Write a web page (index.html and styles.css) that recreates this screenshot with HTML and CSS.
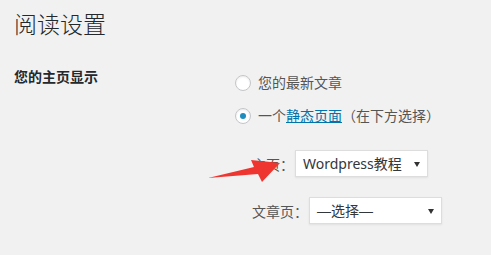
FILE: index.html
```html
<!DOCTYPE html>
<html lang="zh-CN">
<head>
<meta charset="utf-8">
<title>阅读设置</title>
<link rel="stylesheet" href="styles.css">
</head>
<body>
<div class="wrap">
  <h1 class="title">阅读设置</h1>
  <div class="form-row">
    <div class="row-label">您的主页显示</div>
    <div class="row-field">
      <label class="option">
        <span class="radio"></span>
        <span>您的最新文章</span>
      </label>
      <label class="option">
        <span class="radio checked"></span>
        <span>一个<a class="link" href="#">静态页面</a>（在下方选择）</span>
      </label>
      <div class="sub">
        <div class="sub-row">
          <span class="sub-label">主页：</span>
          <span class="select"><span class="select-text">Wordpress教程</span><span class="caret"></span></span>
        </div>
        <div class="sub-row">
          <span class="sub-label">文章页：</span>
          <span class="select"><span class="select-text dash">—选择—</span><span class="caret"></span></span>
        </div>
      </div>
    </div>
  </div>
  <svg class="arrow" width="491" height="255" viewBox="0 0 491 255">
    <polygon points="208,178 254,167 251,160 280,163 262,182 258,174" fill="#ee3530"/>
  </svg>
</div>
</body>
</html>
```
FILE: styles.css
```css
html, body {
  margin: 0;
  padding: 0;
  background: #f1f1f1;
}
body {
  font-family: "Noto Sans", "Noto Sans CJK SC", sans-serif;
  color: #444;
  font-size: 14px;
}
.wrap {
  position: relative;
  width: 491px;
  height: 255px;
  padding-left: 14px;
  box-sizing: border-box;
  overflow: hidden;
}
.title {
  margin: 9px 0 0;
  font-family: "Noto Sans CJK SC", "Noto Sans", sans-serif;
  font-size: 23px;
  line-height: 29px;
  font-weight: 300;
  color: #23282d;
}
.form-row {
  display: grid;
  grid-template-columns: 221px 1fr;
}
.row-label {
  padding-top: 29px;
  font-size: 14px;
  line-height: 20px;
  font-weight: 700;
  color: #23282d;
}
.row-field {
  padding-top: 35px;
  display: flex;
  flex-direction: column;
}
.option {
  display: flex;
  align-items: center;
  height: 20px;
  margin-bottom: 13px;
  line-height: 20px;
  color: #555;
}
.radio {
  width: 14px;
  height: 14px;
  border: 1px solid #c3c6c9;
  border-radius: 50%;
  background: #fff;
  box-shadow: inset 0 1px 2px rgba(0,0,0,0.08);
  margin-right: 7px;
  display: flex;
  align-items: center;
  justify-content: center;
  flex: none;
}
.radio.checked::before {
  content: "";
  width: 6px;
  height: 6px;
  border-radius: 50%;
  background: #1e8cbe;
}
.link {
  color: #0073aa;
  text-decoration: underline;
}
.sub {
  padding-top: 11px;
  padding-left: 17px;
  display: flex;
  flex-direction: column;
  gap: 20px;
}
.sub-row {
  display: flex;
  align-items: center;
  height: 27px;
}
.sub-label {
  color: #555;
  margin-right: 1px;
}
.select {
  position: relative;
  display: flex;
  align-items: center;
  width: 133px;
  height: 27px;
  box-sizing: border-box;
  border: 1px solid #ddd;
  background: #fff;
  box-shadow: 0 1px 2px rgba(0,0,0,0.07);
  padding-left: 7px;
  color: #32373c;
}
.select-text {
  line-height: 20px;
}
.dash {
  font-family: "Liberation Sans", "Noto Sans CJK SC", sans-serif;
}
.caret {
  position: absolute;
  right: 7px;
  top: 50%;
  margin-top: -2px;
  width: 0;
  height: 0;
  border-left: 3px solid transparent;
  border-right: 3px solid transparent;
  border-top: 5px solid #333;
}
.arrow {
  position: absolute;
  left: 0;
  top: 0;
  pointer-events: none;
}
```
